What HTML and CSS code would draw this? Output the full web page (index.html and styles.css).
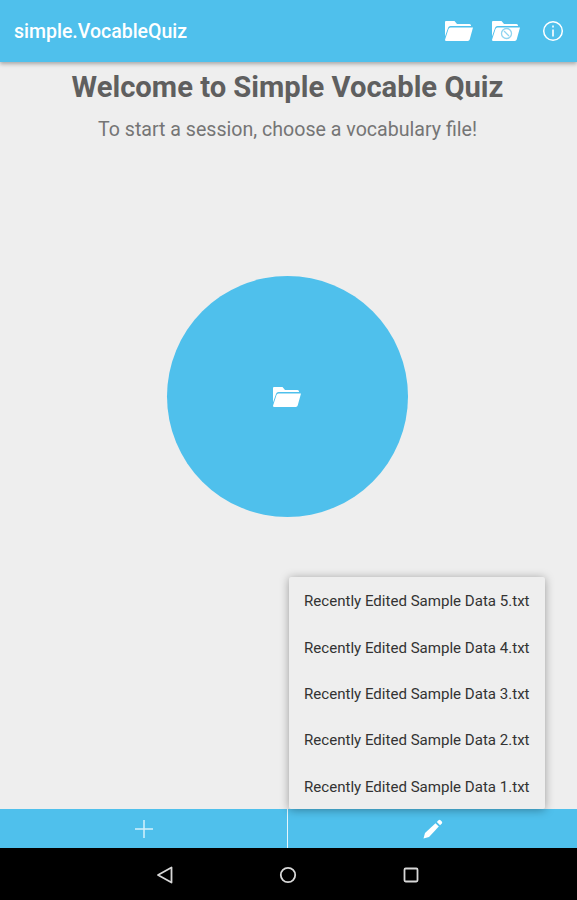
FILE: index.html
```html
<!DOCTYPE html>
<html lang="en">
<head>
    <meta charset="UTF-8">
    <meta name="viewport" content="width=device-width, initial-scale=1.0">
    <title>simple.VocableQuiz</title>
    <link rel="stylesheet" href="styles.css">
</head>
<body>
    <svg class="icon-defs" width="0" height="0">
        <symbol id="folder-open" viewBox="0 0 29 20">
            <path fill="#fff" d="M2 0h8.500l2.500 3h12.500a1.500 1.500 0 0 1 1.500 1.500V5H6.500a2.500 2.500 0 0 0-2.400 1.800L1 15.500V1a1 1 0 0 1 1-1z"/>
            <path fill="#fff" d="M6.500 6.500H29l-3.300 12a2 2 0 0 1-1.900 1.500H2.300a1.200 1.200 0 0 1-1.200-1.500l3.400-10.500a2.100 2.100 0 0 1 2-1.500z"/>
        </symbol>
    </svg>

    <!-- App bar -->
    <header class="app-bar">
        <span class="app-title">simple.VocableQuiz</span>
        <div class="app-actions">
            <svg class="folder-icon"><use href="#folder-open"/></svg>
            <svg class="recent-icon" viewBox="0 0 29 20">
                <use href="#folder-open" width="29" height="20"/>
                <circle cx="15.500" cy="12.500" r="5" fill="#fff" stroke="#8fd4f0" stroke-width="1.300"/>
                <path d="M13 10l5 5" fill="none" stroke="#8fd4f0" stroke-width="1.200"/>
            </svg>
            <svg class="info-icon" viewBox="0 0 22 22">
                <circle cx="11" cy="11" r="9.300" fill="none" stroke="#fff" stroke-width="1.500"/>
                <path d="M11 5.500v2M11 9.500v7" stroke="#fff" stroke-width="1.600"/>
            </svg>
        </div>
    </header>

    <main class="content">
        <h1>Welcome to Simple Vocable Quiz</h1>
        <p class="subtitle">To start a session, choose a vocabulary file!</p>
        <button class="open-circle">
            <svg class="circle-folder"><use href="#folder-open"/></svg>
        </button>

        <!-- Recent files popup -->
        <ul class="recent-menu">
            <li>Recently Edited Sample Data 5.txt</li>
            <li>Recently Edited Sample Data 4.txt</li>
            <li>Recently Edited Sample Data 3.txt</li>
            <li>Recently Edited Sample Data 2.txt</li>
            <li>Recently Edited Sample Data 1.txt</li>
        </ul>
    </main>

    <!-- Bottom buttons -->
    <div class="bottom-bar">
        <div class="bottom-btn first">
            <svg class="plus-icon" viewBox="0 0 18 18">
                <path d="M9 0v18M0 9h18" stroke="#d5f1fb" stroke-width="1.500"/>
            </svg>
        </div>
        <div class="bottom-btn second">
            <svg class="pencil-icon" viewBox="0 0 20 20">
                <path fill="#fff" d="M0.500 19.500l1.500-5.500L12.500 4.200l3.300 3.300L6 18z"/>
                <path fill="#fff" d="M13.800 2.900l1.700-1.700a1.500 1.500 0 0 1 2 0l1.300 1.300a1.500 1.500 0 0 1 0 2l-1.700 1.700z"/>
            </svg>
        </div>
    </div>

    <!-- Android nav bar -->
    <nav class="nav-bar">
        <svg class="nav-icon" viewBox="0 0 18 18">
            <path d="M15.500 1.500v15L2 9z" fill="none" stroke="#d8d8d8" stroke-width="1.800" stroke-linejoin="round"/>
        </svg>
        <svg class="nav-icon" viewBox="0 0 18 18">
            <circle cx="9" cy="9" r="7.200" fill="none" stroke="#d8d8d8" stroke-width="1.800"/>
        </svg>
        <svg class="nav-icon" viewBox="0 0 18 18">
            <rect x="2.500" y="2.500" width="13" height="13" rx="1.200" fill="none" stroke="#d8d8d8" stroke-width="1.800"/>
        </svg>
    </nav>
</body>
</html>
```

FILE: styles.css
```css
/* General Styling */
html, body {
    height: 100%;
}

body {
    margin: 0;
    display: flex;
    flex-direction: column;
    overflow: hidden;
    font-family: Roboto, "Liberation Sans", sans-serif;
    background: #eeeeee;
}

.icon-defs {
    position: absolute;
}

/* App bar */
.app-bar {
    flex: none;
    height: 62px;
    padding: 0 13px 0 14px;
    display: flex;
    align-items: center;
    justify-content: space-between;
    box-sizing: border-box;
    background: #4fc0ec;
    box-shadow: 0 2px 4px rgba(0, 0, 0, 0.3);
    position: relative;
    z-index: 2;
}

.app-title {
    color: white;
    font-size: 19.5px;
    font-weight: 500;
}

.app-actions {
    display: flex;
    align-items: center;
}

.folder-icon, .recent-icon {
    width: 29px;
    height: 20px;
}

.recent-icon {
    margin-left: 18px;
}

.info-icon {
    width: 22px;
    height: 22px;
    margin-left: 22px;
}

/* Main area */
.content {
    flex: 1;
    position: relative;
    display: flex;
    flex-direction: column;
    align-items: center;
}

h1 {
    margin: 9px 2px 0 0;
    color: #5f5f5f;
    font-size: 29.2px;
    line-height: 33px;
    font-weight: 700;
}

.subtitle {
    margin: 14px 2px 0 0;
    color: #757575;
    font-size: 19.6px;
    line-height: 24px;
}

.open-circle {
    margin: 134px 2px 0 0;
    width: 241px;
    height: 241px;
    padding: 0;
    border: none;
    border-radius: 50%;
    background: #4fc0ec;
    display: flex;
    align-items: center;
    justify-content: center;
}

.circle-folder {
    width: 29px;
    height: 20px;
    margin-right: 2px;
}

/* Recent files popup */
.recent-menu {
    position: absolute;
    right: 32px;
    bottom: 0;
    width: 256px;
    height: 232px;
    margin: 0;
    padding: 0;
    list-style: none;
    background: #eeeeee;
    border-radius: 2px;
    box-shadow: 0 1px 10px rgba(0, 0, 0, 0.35);
    z-index: 3;
}

.recent-menu li {
    height: 46.4px;
    padding: 2px 0 0 15px;
    box-sizing: border-box;
    display: flex;
    align-items: center;
    color: #333333;
    font-size: 15.07px;
    white-space: nowrap;
}

/* Bottom buttons */
.bottom-bar {
    flex: none;
    height: 39px;
    display: flex;
    background: #4fc0ec;
}

.bottom-btn {
    display: flex;
    align-items: center;
    justify-content: center;
}

.bottom-btn.first {
    width: 287px;
}

.bottom-btn.second {
    flex: 1;
    border-left: 1px solid #e6f6fc;
}

.plus-icon {
    width: 18px;
    height: 18px;
}

.pencil-icon {
    width: 20px;
    height: 20px;
}

/* Android nav bar */
.nav-bar {
    flex: none;
    height: 52px;
    padding: 2px 2px 0 0;
    box-sizing: border-box;
    display: flex;
    align-items: center;
    justify-content: center;
    gap: 105px;
    background: black;
}

.nav-icon {
    width: 18px;
    height: 18px;
}
```
